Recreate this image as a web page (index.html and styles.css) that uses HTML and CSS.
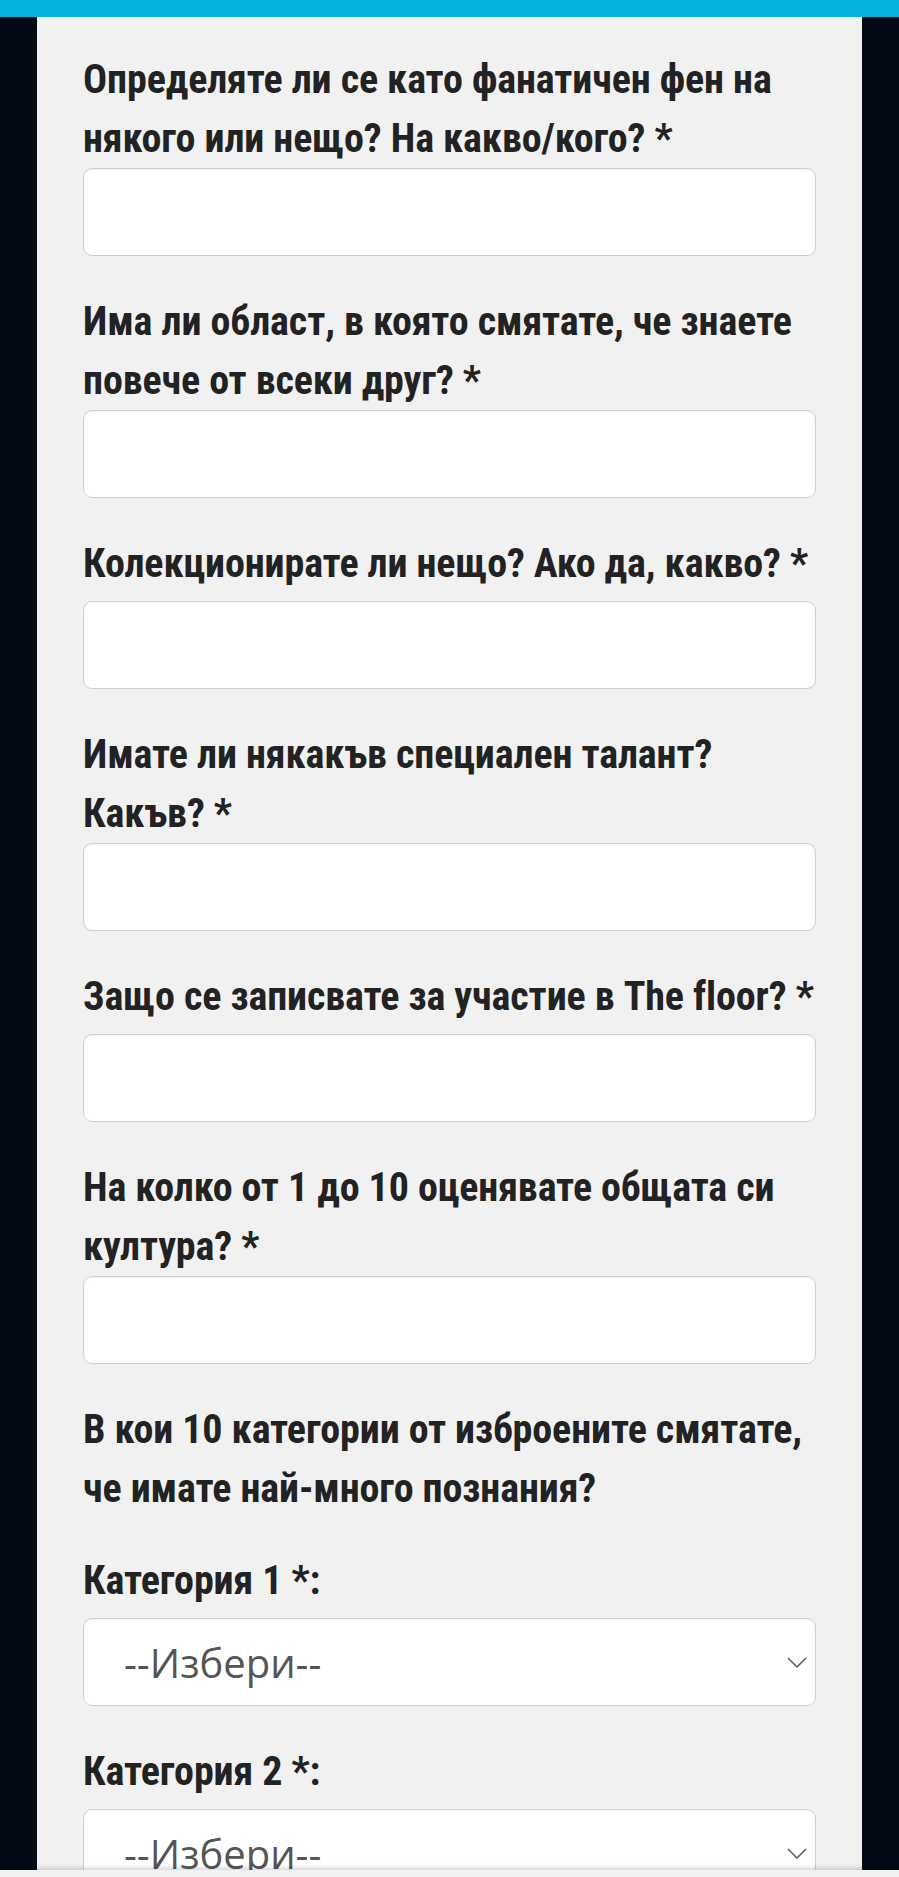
FILE: index.html
```html
<!DOCTYPE html>
<html lang="bg">
<head>
<meta charset="utf-8">
<link rel="stylesheet" href="styles.css">
</head>
<body>
<div class="topbar"></div>
<main class="panel">
  <form class="form">
    <div class="field">
      <label class="q">Определяте ли се като фанатичен фен на някого или нещо? На какво/кого? *</label>
      <input class="inp" type="text">
    </div>
    <div class="field">
      <label class="q">Има ли област, в която смятате, че знаете повече от всеки друг? *</label>
      <input class="inp" type="text">
    </div>
    <div class="field">
      <label class="q one">Колекционирате ли нещо? Ако да, какво? *</label>
      <input class="inp" type="text">
    </div>
    <div class="field">
      <label class="q">Имате ли някакъв специален талант? Какъв? *</label>
      <input class="inp" type="text">
    </div>
    <div class="field">
      <label class="q one">Защо се записвате за участие в The floor? *</label>
      <input class="inp" type="text">
    </div>
    <div class="field">
      <label class="q">На колко от 1 до 10 оценявате общата си култура? *</label>
      <input class="inp" type="text">
    </div>
    <div class="field intro">
      <p class="q">В кои 10 категории от изброените смятате, че имате най-много познания?</p>
    </div>
    <div class="field">
      <label class="q one">Категория 1 *:</label>
      <div class="sel"><span class="ph">--Избери--</span><svg class="chev" viewBox="0 0 20 11" width="20" height="11"><path d="M1 1 L10 10 L19 1" fill="none" stroke="#5a5a5a" stroke-width="1.5"/></svg></div>
    </div>
    <div class="field">
      <label class="q one">Категория 2 *:</label>
      <div class="sel"><span class="ph">--Избери--</span><svg class="chev" viewBox="0 0 20 11" width="20" height="11"><path d="M1 1 L10 10 L19 1" fill="none" stroke="#5a5a5a" stroke-width="1.5"/></svg></div>
    </div>
  </form>
</main>
<div class="navbar"></div>
</body>
</html>
```
FILE: styles.css
```css
html, body {
  margin: 0;
  padding: 0;
}
body {
  background: #030914;
  height: 1877px;
  overflow: hidden;
  display: flex;
  flex-direction: column;
  font-family: "Roboto Condensed", "Roboto", sans-serif;
}
.topbar {
  height: 17px;
  background: #00b1dd;
  flex: none;
}
.panel {
  flex: 1;
  min-height: 0;
  overflow: hidden;
  margin: 0 37px;
  background: #f1f1f1;
  padding: 0 46px;
}
.form {
  display: flex;
  flex-direction: column;
  padding-top: 33px;
}
.field {
  display: flex;
  flex-direction: column;
  margin-bottom: 36px;
}
.field.intro {
  margin-bottom: 33px;
}
.q {
  display: block;
  margin: 0 -14px 0 0;
  font-size: 40px;
  line-height: 59px;
  font-weight: 700;
  color: #222;
  letter-spacing: -0.1px;
}
.q.one {
  padding-bottom: 8px;
}
.inp,
.sel {
  box-sizing: border-box;
  height: 88px;
  width: 100%;
  border: 1.5px solid #cfcfcf;
  border-radius: 9px;
  background: #fff;
  box-shadow: inset 0 1px 2px rgba(0, 0, 0, 0.06);
  margin: 0;
}
.sel {
  display: flex;
  align-items: center;
  justify-content: space-between;
  padding: 0 8px 0 40px;
}
.ph {
  font-family: "Open Sans", sans-serif;
  font-size: 40px;
  color: #555;
}
.chev {
  flex: none;
}
.navbar {
  height: 7px;
  flex: none;
  background: #f2f2f2;
  box-shadow: 0 -2px 5px rgba(0, 0, 0, 0.18);
  position: relative;
}
```
